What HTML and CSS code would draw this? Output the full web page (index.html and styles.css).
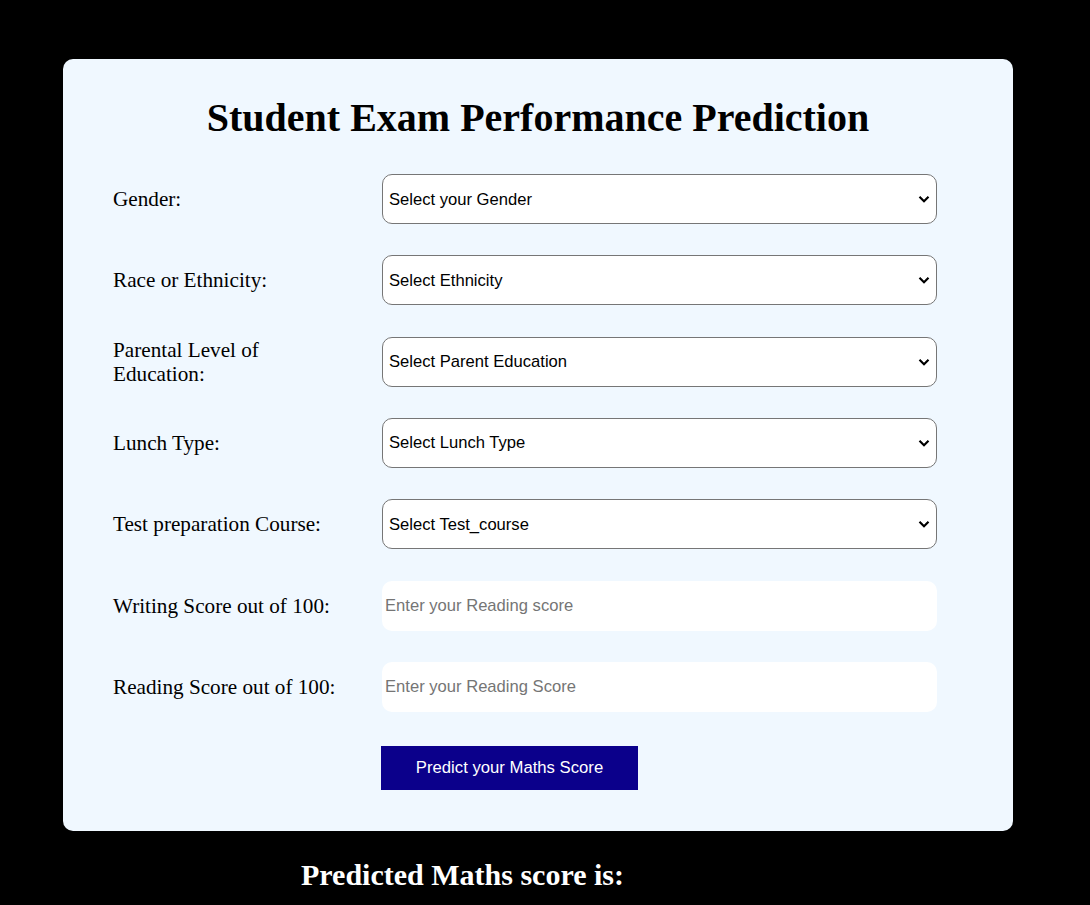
FILE: index.html
```html
<!DOCTYPE html>
<html lang="en">
<head>
<meta charset="utf-8">
<title>Student Exam Performance Prediction</title>
<link rel="stylesheet" href="styles.css">
</head>
<body>
<div class="card">
  <h1 class="title">Student Exam Performance Prediction</h1>
  <form class="form">
    <label class="label">Gender:</label>
    <select class="select">
      <option selected disabled>Select your Gender</option>
      <option>male</option>
      <option>female</option>
    </select>

    <label class="label">Race or Ethnicity:</label>
    <select class="select">
      <option selected disabled>Select Ethnicity</option>
      <option>group A</option>
    </select>

    <label class="label">Parental Level of Education:</label>
    <select class="select">
      <option selected disabled>Select Parent Education</option>
    </select>

    <label class="label">Lunch Type:</label>
    <select class="select">
      <option selected disabled>Select Lunch Type</option>
    </select>

    <label class="label">Test preparation Course:</label>
    <select class="select">
      <option selected disabled>Select Test_course</option>
    </select>

    <label class="label">Writing Score out of 100:</label>
    <input class="input" type="number" placeholder="Enter your Reading score">

    <label class="label">Reading Score out of 100:</label>
    <input class="input" type="number" placeholder="Enter your Reading Score">

    <div class="spacer"></div>
    <button class="btn" type="button">Predict your Maths Score</button>
  </form>
</div>
<h2 class="result">Predicted Maths score is:</h2>
</body>
</html>
```

FILE: styles.css
```css
html, body {
  margin: 0;
  padding: 0;
  background: #000;
}
body {
  padding-top: 59px;
  font-family: "Liberation Serif", "Times New Roman", serif;
}
.card {
  box-sizing: border-box;
  margin-left: 63px;
  width: 950px;
  background: #f0f8ff;
  border-radius: 10px;
  padding: 36px 50px 41px;
}
.title {
  margin: 0 0 33px;
  text-align: center;
  font-size: 40px;
  line-height: 46px;
  font-weight: bold;
  color: #000;
}
.form {
  display: grid;
  grid-template-columns: 269px 555px;
  grid-template-rows: repeat(7, 50px) auto;
  row-gap: 31.33px;
  align-items: center;
}
.label {
  font-size: 21.2px;
  color: #000;
  max-width: 232px;
  line-height: 24px;
}
.select {
  box-sizing: border-box;
  height: 50px;
  width: 555px;
  border: 1px solid #767676;
  border-radius: 10px;
  background-color: #fff;
  background-image: url("data:image/svg+xml,%3Csvg xmlns='http://www.w3.org/2000/svg' width='12' height='8' viewBox='0 0 12 8'%3E%3Cpath d='M1.5 1.8 6 6.2 10.5 1.8' fill='none' stroke='%23000' stroke-width='2.2'/%3E%3C/svg%3E");
  background-repeat: no-repeat;
  background-position: right 6px center;
  background-size: 12px 8px;
  -webkit-appearance: none;
  appearance: none;
  font-family: "Liberation Sans", Arial, sans-serif;
  font-size: 16.6px;
  color: #000;
  padding: 0 24px 0 6px;
  margin: 0;
}
.input {
  box-sizing: border-box;
  height: 50px;
  width: 555px;
  border: none;
  border-radius: 10px;
  background: #fff;
  font-family: "Liberation Sans", Arial, sans-serif;
  font-size: 16.6px;
  padding: 1px 3px;
  margin: 0;
  outline: none;
}
.input::placeholder {
  color: #757575;
}
.btn {
  box-sizing: border-box;
  width: 257px;
  height: 44px;
  margin-top: 3px;
  margin-left: -1px;
  align-self: start;
  border: none;
  background: #0b008b;
  color: #fff;
  font-family: "Liberation Sans", Arial, sans-serif;
  font-size: 16.7px;
  padding: 0;
  cursor: pointer;
}
.result {
  margin: 27px 0 0 301px;
  font-size: 30px;
  line-height: 34px;
  font-weight: bold;
  color: #fff;
}
```
